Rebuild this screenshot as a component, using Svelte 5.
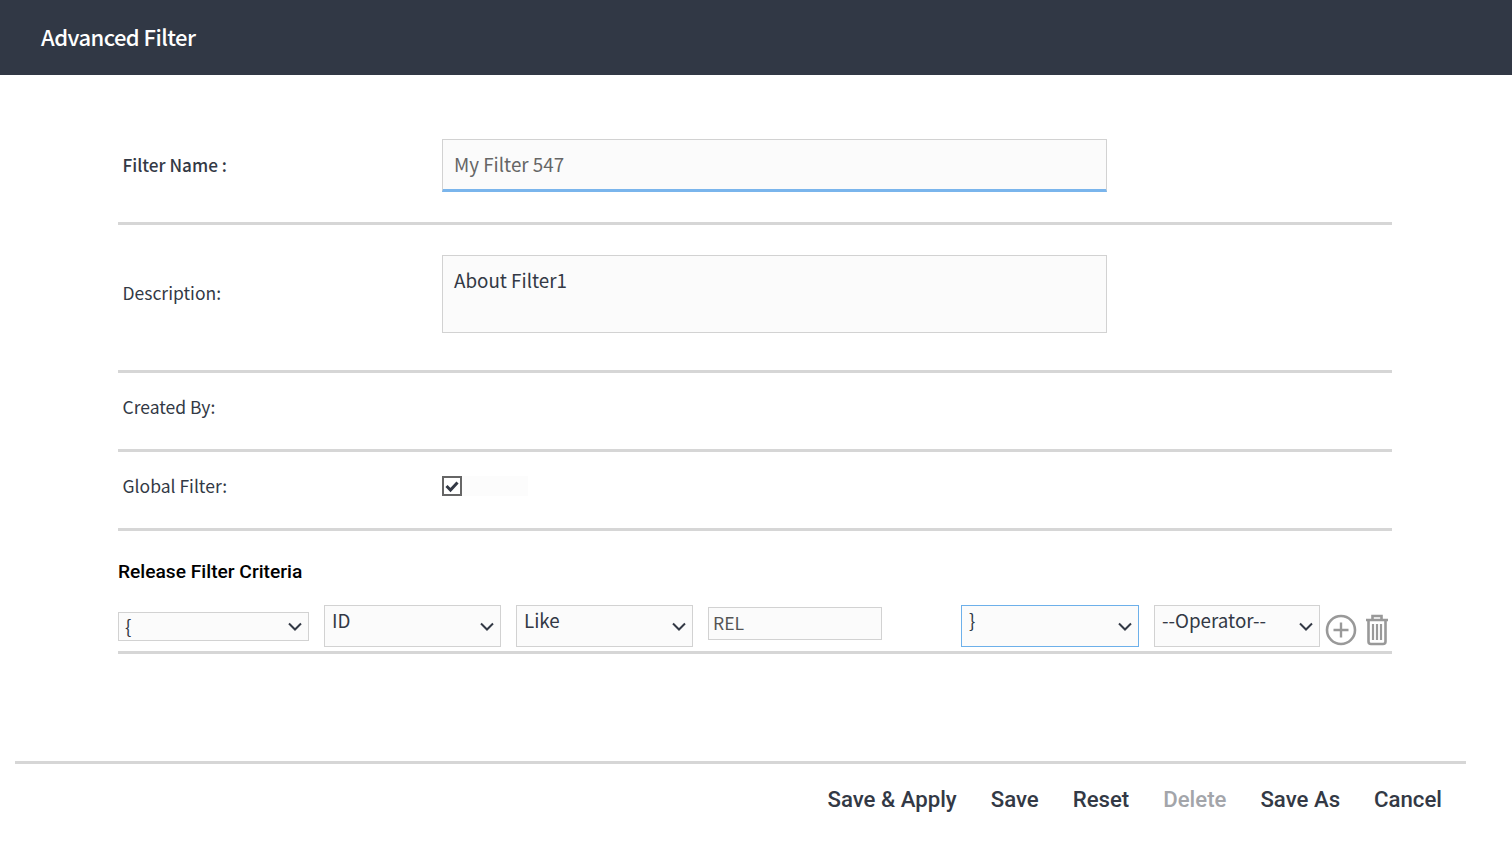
<script>
	const criteria = [
		{ value: '{', cls: 'paren' },
		{ value: 'ID', cls: 'field' },
		{ value: 'Like', cls: 'field' }
	];
	const actions = ['Save & Apply', 'Save', 'Reset', 'Delete', 'Save As', 'Cancel'];
</script>

{#snippet dropdown(value, cls)}
	<div class="select {cls}">
		<select>
			<option>{value}</option>
		</select>
		<svg class="chevron" viewBox="0 0 14 9" width="14" height="9">
			<path d="M1 1.5 L7 7.5 L13 1.5" fill="none" stroke="#333945" stroke-width="2" />
		</svg>
	</div>
{/snippet}

<div class="page">
	<header>Advanced Filter</header>

	<main>
		<section class="row name">
			<label for="filter-name"><b>Filter Name :</b></label>
			<input id="filter-name" class="name-input" value="My Filter 547" />
		</section>
		<section class="row desc">
			<label for="filter-desc">Description:</label>
			<textarea id="filter-desc">About Filter1</textarea>
		</section>
		<section class="row created">
			<span class="label">Created By:</span>
		</section>
		<section class="row global">
			<label for="filter-global">Global Filter:</label>
			<div class="check-wrap">
				<div class="check" id="filter-global">
					<svg viewBox="0 0 16 16" width="16" height="16">
						<path d="M2.5 8 L6.5 12 L13.5 4.5" fill="none" stroke="#333945" stroke-width="3" />
					</svg>
				</div>
			</div>
		</section>

		<h2>Release Filter Criteria</h2>

		<section class="criteria">
			{#each criteria as c}
				{@render dropdown(c.value, c.cls)}
			{/each}
			<input class="ref" value="REL" />
			{@render dropdown('}', 'field close')}
			{@render dropdown('--Operator--', 'field operator')}
			<svg class="icon add" viewBox="0 0 32 32" width="32" height="32">
				<circle cx="16" cy="16" r="14" fill="none" stroke="#999" stroke-width="2.6" />
				<path d="M16 8.5 V23.5 M8.5 16 H23.5" stroke="#999" stroke-width="2.4" />
			</svg>
			<svg class="icon trash" viewBox="0 0 24 32" width="24" height="32">
				<path
					d="M1 6 H23 M7.5 5 V2 H16.5 V5 M3.5 7 V27.5 Q3.5 30 6 30 H18 Q20.5 30 20.5 27.5 V7"
					fill="none"
					stroke="#999"
					stroke-width="2.6"
				/>
				<path d="M8 10 V26 M12 10 V26 M16 10 V26" stroke="#999" stroke-width="2.2" />
			</svg>
		</section>
	</main>

	<footer>
		{#each actions as action}
			<button class:disabled={action === 'Delete'}>{action}</button>
		{/each}
	</footer>
</div>

<style>
	:global(body) {
		background: #fff;
	}
	.page {
		width: 1512px;
		height: 855px;
		overflow: hidden;
		font-family: 'Noto Sans CJK KR', 'Noto Sans', sans-serif;
		color: #333945;
	}
	header {
		height: 75px;
		background: #313845;
		color: #fff;
		font-size: 22px;
		font-weight: 500;
		letter-spacing: -0.55px;
		line-height: 73px;
		padding-left: 41px;
	}
	main {
		margin: 0 120px 0 118px;
		height: 686px;
	}
	.row {
		display: flex;
		align-items: center;
		border-bottom: 3px solid #d6d6d6;
		font-size: 17.5px;
		box-sizing: border-box;
	}
	.row label,
	.label {
		width: 324px;
		padding-left: 4.5px;
		box-sizing: border-box;
	}
	.row b {
		font-weight: 500;
		font-size: 17.2px;
	}
	.name {
		height: 150px;
		align-items: flex-start;
		padding-top: 64px;
	}
	.name label {
		line-height: 52px;
	}
	.desc {
		height: 148px;
		align-items: flex-start;
		padding-top: 30px;
	}
	.desc label {
		line-height: 76px;
	}
	.created,
	.global {
		height: 79px;
		padding-bottom: 10px;
	}
	input,
	textarea,
	select {
		font-family: inherit;
		color: #333945;
		background: #fbfbfb;
		border: 1px solid #d2d2d2;
		box-sizing: border-box;
		border-radius: 0;
		outline: none;
		margin: 0;
	}
	.name-input {
		width: 665px;
		height: 53px;
		font-size: 18.8px;
		padding: 0 11px 2px;
		color: #666;
		border-bottom: 3px solid #7ab5ec;
	}
	textarea {
		display: block;
		width: 665px;
		height: 78px;
		font-size: 18.8px;
		line-height: 28px;
		padding: 10px 11px;
		resize: none;
	}
	.check-wrap {
		width: 86px;
		height: 20px;
		margin-top: 2px;
		background: #fcfcfc;
	}
	.check {
		width: 20px;
		height: 20px;
		box-sizing: border-box;
		border: 2px solid #666;
		background: #fff;
		display: flex;
		align-items: center;
		justify-content: center;
	}
	h2 {
		margin: 0;
		height: 74px;
		line-height: 82px;
		font-family: Roboto, sans-serif;
		font-size: 19.2px;
		font-weight: 500;
		color: #000;
	}
	.criteria {
		display: flex;
		align-items: flex-start;
		height: 46px;
		border-bottom: 3px solid #d6d6d6;
	}
	.select {
		position: relative;
		margin-right: 15px;
	}
	.select select {
		appearance: none;
		display: block;
		width: 100%;
		height: 100%;
		font-size: 18.8px;
		line-height: 26px;
		padding: 0 7px 12px;
	}
	.chevron {
		position: absolute;
		right: 7px;
		bottom: 16px;
	}
	.paren {
		width: 191px;
		height: 29px;
		margin-top: 7px;
	}
	.paren select {
		padding: 0 6px 1px;
	}
	.paren .chevron {
		bottom: 10px;
	}
	.field {
		width: 177px;
		height: 42px;
	}
	.ref {
		width: 174px;
		height: 33px;
		margin: 2px 79px 0 0;
		font-size: 17.6px;
		color: #555;
		padding: 0 4px 3px;
	}
	.close {
		width: 178px;
	}
	.close select {
		border-color: #6db0ea;
	}
	.operator {
		width: 166px;
		margin-right: 5px;
	}
	.icon {
		flex: none;
		margin-top: 9px;
	}
	.trash {
		margin-left: 8px;
	}
	footer {
		margin: 0 46px 0 15px;
		border-top: 3px solid #d6d6d6;
		display: flex;
		justify-content: flex-end;
		gap: 34px;
		padding: 20px 24px 0 0;
	}
	button {
		border: 0;
		background: none;
		padding: 0;
		font-family: Roboto, sans-serif;
		font-size: 22.2px;
		font-weight: 500;
		line-height: 30px;
		color: #333945;
	}
	button.disabled {
		color: #a3a5aa;
	}
</style>
